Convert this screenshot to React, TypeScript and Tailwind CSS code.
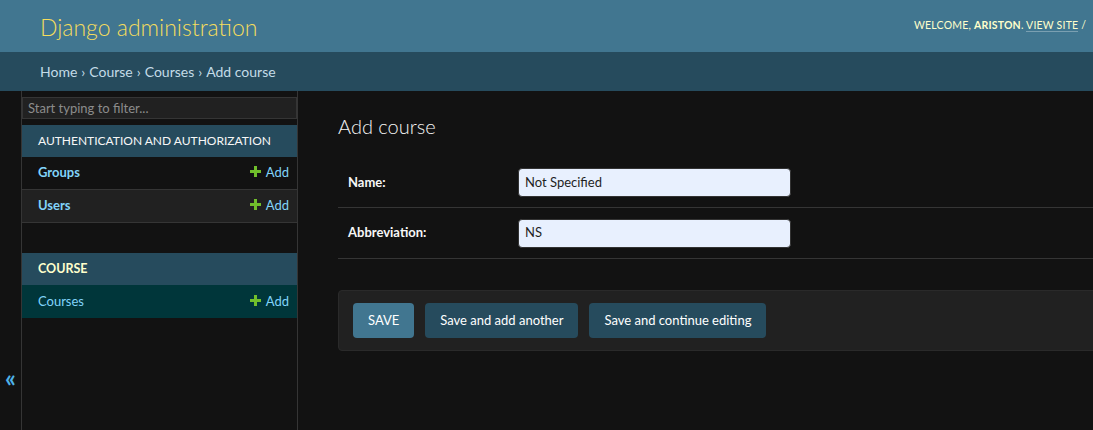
import React from "react";

const font = { fontFamily: 'Lato, "Noto Sans", Arial, sans-serif' };

function AddLink() {
  return (
    <a className="flex items-center gap-[5px] text-[13px] text-[#81d4fa]">
      <svg width="11" height="11" viewBox="0 0 11 11" className="mt-[-3px]">
        <path d="M4 0h3v4h4v3H7v4H4V7H0V4h4z" fill="#70bf2b" />
      </svg>
      Add
    </a>
  );
}

function NavRow({ label, bg, bold = true, border = true }: { label: string; bg: string; bold?: boolean; border?: boolean }) {
  return (
    <div className={`flex h-[33px] items-center justify-between pl-4 pr-2 ${bg} ${border ? "border-b border-[#353535]" : ""}`}>
      <span className={`text-[13px] text-[#81d4fa] ${bold ? "font-bold" : ""}`}>{label}</span>
      <AddLink />
    </div>
  );
}

export default function App() {
  return (
    <div className="w-[1093px] h-[430px] overflow-hidden bg-[#121212]" style={font}>
      <div className="w-[1330px] min-h-[430px] flex flex-col bg-[#121212]">
        {/* header */}
        <div className="h-[52px] bg-[#417690] flex items-center px-10">
          <div className="w-[874px] text-[23px] font-light text-[#f5dd5d] leading-none mt-[3px]">Django administration</div>
          <div className="text-[10.5px] tracking-[0.2px] text-[#ffffcc] uppercase whitespace-nowrap">
            WELCOME, <strong className="font-bold">Ariston</strong>.{" "}
            <a className="border-b border-[rgba(255,255,255,0.3)] text-[#ffffcc]">View site</a> /
          </div>
        </div>
        {/* breadcrumbs */}
        <div className="h-[39px] bg-[#264b5d] flex items-center px-10 text-[14px] text-[#c4dce8]">
          <span>Home</span>
          <span className="px-[4px]">›</span>
          <span>Course</span>
          <span className="px-[4px]">›</span>
          <span>Courses</span>
          <span className="px-[4px]">›</span>
          <span>Add course</span>
        </div>
        {/* body */}
        <div className="flex flex-1">
          <div className="w-[22px] border-r border-[#353535] flex justify-center pt-[275px] text-[24px] font-bold text-[#4fb2e8] leading-none">
            «
          </div>
          <div className="w-[276px] border-r border-[#353535] pt-[6px] flex-none">
            <div className="h-[22px] border border-[#353535] bg-[#212121] px-[5px] text-[13px] text-[#8c8c8c] leading-[20px]">
              Start typing to filter...
            </div>
            <div className="mt-[6px]">
              <div className="h-[32px] bg-[#264b5d] flex items-center pl-4 text-[12px] text-[#f7f7f7] uppercase">
                Authentication and Authorization
              </div>
              <NavRow label="Groups" bg="bg-[#121212]" />
              <NavRow label="Users" bg="bg-[#212121]" />
            </div>
            <div className="mt-[30px]">
              <div className="h-[32px] bg-[#264b5d] flex items-center pl-4 text-[12.5px] text-[#ffffcc] font-bold uppercase">
                Course
              </div>
              <NavRow label="Courses" bg="bg-[#00363a]" bold={false} border={false} />
            </div>
          </div>
          {/* content */}
          <div className="flex-1 px-10 pt-[20px]">
            <h1 className="text-[20px] font-light text-[#f5f5f5] leading-[24px] mb-[20px] mt-[3px]">Add course</h1>
            <div>
              <div className="flex items-center border-b border-[#353535] h-[50px] px-[10px]">
                <label className="w-[170px] text-[13px] font-bold text-[#f7f7f7]">Name:</label>
                <div className="w-[273px] h-[29px] rounded-[4px] border border-[#333] bg-[#e8f0fe] px-[6px] flex items-center text-[13px] text-[#1f1f1f]">
                  Not Specified
                </div>
              </div>
              <div className="flex items-center border-b border-[#353535] h-[51px] px-[10px]">
                <label className="w-[170px] text-[13px] font-bold text-[#f7f7f7]">Abbreviation:</label>
                <div className="w-[273px] h-[29px] rounded-[4px] border border-[#333] bg-[#e8f0fe] px-[6px] flex items-center text-[13px] text-[#1f1f1f]">
                  NS
                </div>
              </div>
            </div>
            <div className="mt-[31px] bg-[#212121] border border-[#2a2a2a] rounded-[4px] px-[14px] py-[12px] flex gap-[11px]">
              <button className="h-[35px] px-[15px] rounded-[4px] bg-[#417690] text-[13px] text-white">SAVE</button>
              <button className="h-[35px] px-[15px] rounded-[4px] bg-[#264b5d] text-[13px] text-white">Save and add another</button>
              <button className="h-[35px] px-[15px] rounded-[4px] bg-[#264b5d] text-[13px] text-white">Save and continue editing</button>
            </div>
          </div>
        </div>
      </div>
    </div>
  );
}
